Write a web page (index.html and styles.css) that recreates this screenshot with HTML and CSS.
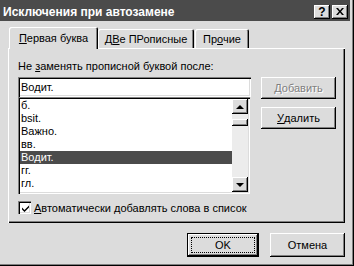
FILE: index.html
```html
<!DOCTYPE html>
<html lang="ru">

<head>
    <meta charset="UTF-8">
    <title>Исключения при автозамене</title>
    <link rel="stylesheet" href="styles.css">
</head>

<body>
    <div class="window">
        <div class="titlebar">
            <span class="title">Исключения при автозамене</span>
            <div class="caption-buttons">
                <span class="cbtn help">?</span>
                <span class="cbtn">
                    <svg width="8" height="7" viewBox="0 0 8 7">
                        <path d="M0 0h2l2 2.5 2-2.5h2l-3 3.5 3 3.5h-2l-2-2.5-2 2.5h-2l3-3.5z" fill="#000" />
                    </svg>
                </span>
            </div>
        </div>

        <div class="content">
            <div class="tabs">
                <div class="tab tab1 active"><u>П</u>ервая буква</div>
                <div class="tab tab2">Д<u>В</u>е ПРописные</div>
                <div class="tab tab3">Пр<u>о</u>чие</div>
            </div>

            <div class="panel">
                <div class="label">Не <u>з</u>аменять прописной буквой после:</div>
                <div class="row">
                    <div class="left">
                        <div class="input">Водит.</div>
                        <div class="list">
                            <div class="items">
                                <div class="item">б.</div>
                                <div class="item">bsit.</div>
                                <div class="item">Важно.</div>
                                <div class="item">вв.</div>
                                <div class="item sel">Водит.</div>
                                <div class="item">гг.</div>
                                <div class="item">гл.</div>
                            </div>
                            <div class="scrollbar">
                                <div class="sbtn"><span class="arrow up"></span></div>
                                <div class="thumb"></div>
                                <div class="sbtn down"><span class="arrow dn"></span></div>
                            </div>
                        </div>
                    </div>
                    <div class="side">
                        <div class="btn disabled">Добавить</div>
                        <div class="btn"><u>У</u>далить</div>
                    </div>
                </div>
                <div class="check">
                    <span class="box">
                        <svg width="9" height="9" viewBox="0 0 9 9">
                            <path d="M1 3.5l2.5 2.5 4.5-4.5v2l-4.5 4.5-2.5-2.5z" fill="#000" />
                        </svg>
                    </span>
                    <span class="check-text"><u>А</u>втоматически добавлять слова в список</span>
                </div>
            </div>

            <div class="footer">
                <div class="btn ok"><span class="focus">OK</span></div>
                <div class="btn cancel">Отмена</div>
            </div>
        </div>
    </div>
</body>

</html>
```

FILE: styles.css
```css
body,
html {
    margin: 0;
    padding: 0;
}

* {
    box-sizing: border-box;
}

body {
    font: 11px "Liberation Sans", Arial, sans-serif;
    color: #000;
    background: #dcdcdc;
}

u {
    text-decoration: underline;
    text-underline-offset: 1px;
}

.window {
    width: 354px;
    height: 266px;
    padding: 0 4px 4px 0;
    background: #dcdcdc;
    display: flex;
    flex-direction: column;
    box-shadow: inset -1px -1px #000, inset -2px -2px #808080;
}

/* заголовок */
.titlebar {
    height: 21px;
    background: #4b4b4b;
    color: #fff;
    display: flex;
    align-items: center;
    padding: 2px 2px 0 3px;
}

.title {
    font: bold 12px "Liberation Sans", Arial, sans-serif;
}

.caption-buttons {
    margin-left: auto;
    display: flex;
    gap: 2px;
}

.cbtn {
    width: 16px;
    height: 14px;
    background: #dcdcdc;
    color: #000;
    display: flex;
    align-items: center;
    justify-content: center;
    font: bold 12px "Liberation Sans", Arial, sans-serif;
    box-shadow: inset -1px -1px #000, inset 1px 1px #fff, inset -2px -2px #808080;
}

.content {
    flex: 1;
    padding: 6px 5px 0 8px;
}

/* вкладки */
.tabs {
    height: 21px;
    display: flex;
    align-items: flex-end;
}

.tab {
    height: 19px;
    padding-top: 4px;
    text-align: center;
    background: #dcdcdc;
    box-shadow: inset 1px 1px #fff, inset -1px 0 #000, inset -2px 0 #808080;
    border-radius: 2px 2px 0 0;
}

.tab.active {
    height: 22px;
    margin-bottom: -1px;
    padding-top: 5px;
    z-index: 1;
}

.tab1 {
    width: 89px;
    margin-left: 1px;
}

.tab2 {
    width: 96px;
}

.tab3 {
    width: 54px;
    margin-left: 1px;
}

.panel {
    height: 175px;
    padding: 12px 9px 0 10px;
    box-shadow: inset 1px 1px #fff, inset -1px -1px #000, inset -2px -2px #808080;
}

.label {
    height: 13px;
    line-height: 13px;
    margin-bottom: 4px;
}

.row {
    display: flex;
    gap: 10px;
}

.left {
    width: 233px;
}

.input,
.list,
.box {
    background: #fff;
    box-shadow: inset 1px 1px #808080, inset 2px 2px #000, inset -1px -1px #fff, inset -2px -2px #dcdcdc;
}

.input {
    height: 20px;
    padding: 3px 3px 0 3px;
    line-height: 14px;
}

.list {
    width: 232px;
    height: 97px;
    padding: 2px;
    display: flex;
}

.items {
    flex: 1;
}

.item {
    height: 13px;
    line-height: 13px;
    padding-left: 1px;
}

.item.sel {
    background: #4b4b4b;
    color: #fff;
}

.scrollbar {
    width: 16px;
    display: flex;
    flex-direction: column;
    background: #ececec;
}

.sbtn,
.thumb {
    background: #dcdcdc;
    box-shadow: inset -1px -1px #000, inset 1px 1px #fff, inset -2px -2px #808080;
}

.sbtn {
    height: 15px;
    display: flex;
    align-items: center;
    justify-content: center;
}

.sbtn.down {
    margin-top: auto;
}

.thumb {
    height: 7px;
    margin-top: 5px;
}

.arrow {
    width: 0;
    height: 0;
    border-left: 4px solid transparent;
    border-right: 4px solid transparent;
}

.arrow.up {
    border-bottom: 4px solid #000;
}

.arrow.dn {
    border-top: 4px solid #000;
}

/* кнопки */
.side {
    display: flex;
    flex-direction: column;
    gap: 8px;
}

.btn {
    width: 75px;
    height: 22px;
    background: #dcdcdc;
    display: flex;
    align-items: center;
    justify-content: center;
    box-shadow: inset -1px -1px #000, inset 1px 1px #fff, inset -2px -2px #808080;
}

.btn.disabled {
    color: #808080;
    text-shadow: 1px 1px #fff;
}

.check {
    margin-top: 7px;
    display: flex;
    align-items: center;
    gap: 3px;
}

.box {
    width: 13px;
    height: 13px;
    display: flex;
    align-items: center;
    justify-content: center;
    padding: 1px 0 0 1px;
}

.footer {
    margin-top: 10px;
    display: flex;
    justify-content: flex-end;
    gap: 11px;
}

.footer .btn {
    height: 24px;
}

.btn.ok {
    width: 72px;
    padding: 4px;
    box-shadow: inset 0 0 0 1px #000, inset -2px -2px #000, inset 2px 2px #fff, inset -3px -3px #808080;
}

.focus {
    flex: 1;
    align-self: stretch;
    display: flex;
    align-items: center;
    justify-content: center;
    border: 1px dotted #000;
}
```
